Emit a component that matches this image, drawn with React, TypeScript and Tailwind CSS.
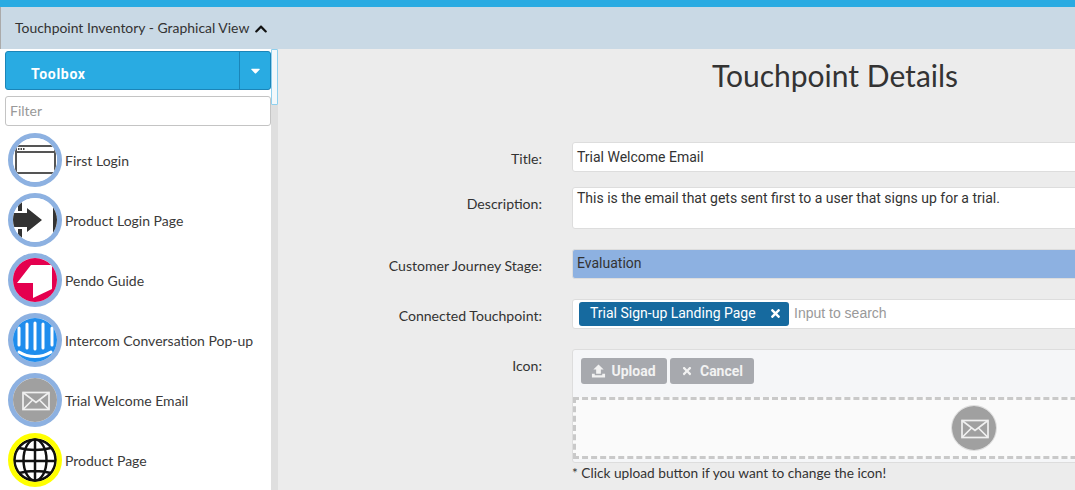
import { FaCaretDown, FaChevronUp, FaTimes } from "react-icons/fa";
import type { ReactNode } from "react";

function WindowIcon() {
  return (
    <svg viewBox="0 0 44 44" className="w-full h-full bg-white">
      <rect x="3" y="8" width="39" height="27" fill="none" stroke="#555" strokeWidth="2" />
      <path d="M3 14h39" stroke="#555" strokeWidth="2" />
      <path d="M5 11h1.500M7.500 11h1.500M10 11h1.500" stroke="#444" strokeWidth="1.800" />
    </svg>
  );
}

function LoginIcon() {
  return (
    <svg viewBox="0 0 44 44" className="w-full h-full bg-white">
      <path d="M5 0h4v13H5zM5 31h4v13H5zM40 0h4v44h-4z" fill="#333" />
      <path d="M0 15h14V10l15 12-15 12v-5H0z" fill="#333" />
    </svg>
  );
}

function PendoIcon() {
  return (
    <svg viewBox="0 0 44 44" className="w-full h-full bg-[#e4004f]">
      <path d="M18 7h21v24L20 40V25H4z" fill="#fff" />
    </svg>
  );
}

function IntercomIcon() {
  return (
    <svg viewBox="0 0 44 44" className="w-full h-full bg-[#1f8ded]">
      <path d="M6 10v17M14 6v24M22 5v26M30 6v24M39 10v17" stroke="#fff" strokeWidth="3" strokeLinecap="round" />
      <path d="M6 34c9 6 23 6 32 0" fill="none" stroke="#fff" strokeWidth="3" strokeLinecap="round" />
    </svg>
  );
}

function EnvelopeIcon() {
  return (
    <svg viewBox="0 0 44 44" className="w-full h-full bg-[#a0a0a0]">
      <rect x="10" y="14.500" width="26" height="17" fill="none" stroke="#f0f0f0" strokeWidth="1.700" />
      <path d="M10 14.500l13 10 13-10M10 31.500l9.500-9.500M36 31.500l-9.500-9.500" fill="none" stroke="#f0f0f0" strokeWidth="1.700" />
    </svg>
  );
}

function GlobeIcon() {
  return (
    <svg viewBox="0 0 44 44" className="w-full h-full bg-[#ffff00]">
      <g fill="#fff" stroke="#111" strokeWidth="2.500">
        <circle cx="22" cy="22" r="20.500" />
        <ellipse cx="22" cy="22" rx="11.500" ry="20.500" />
        <path d="M22 2v40M2 23h40M6 10c10 2.500 22 2.500 32 0M6 35c10-2.500 22-2.500 32 0" fill="none" />
      </g>
    </svg>
  );
}

const tools: { name: string; icon: ReactNode; ring: string }[] = [
  { name: "First Login", icon: <WindowIcon />, ring: "border-[#8db1e1]" },
  { name: "Product Login Page", icon: <LoginIcon />, ring: "border-[#8db1e1]" },
  { name: "Pendo Guide", icon: <PendoIcon />, ring: "border-[#8db1e1]" },
  { name: "Intercom Conversation Pop-up", icon: <IntercomIcon />, ring: "border-[#8db1e1]" },
  { name: "Trial Welcome Email", icon: <EnvelopeIcon />, ring: "border-[#8db1e1]" },
  { name: "Product Page", icon: <GlobeIcon />, ring: "border-[#ffff00]" },
];

function Row({ label, top, children }: { label: string; top?: boolean; children: ReactNode }) {
  return (
    <div className={`flex gap-[30px] ${top ? "items-start" : "items-center"}`}>
      <label className={`w-[264px] shrink-0 text-right text-[14.1px] text-[#333] ${top ? "pt-[6px]" : "pt-[4px]"}`}>
        {label}
      </label>
      <div className="flex-1 min-w-0">{children}</div>
    </div>
  );
}

export default function App() {
  return (
    <div className="h-[490px] w-[1075px] overflow-hidden bg-white font-['Lato',sans-serif] text-[#333]">
      <div className="h-[7px] bg-[#29abe2]" />
      <div className="flex h-[42px] items-center gap-[5px] border-l border-[#aaa] bg-[#c9d9e5] pl-[14px] text-[13.95px]">
        <span>Touchpoint Inventory - Graphical View</span>
        <FaChevronUp className="mt-[1px] w-[14px] h-[14px] text-[#111]" />
      </div>

      <div className="flex h-[441px]">
        <aside className="flex w-[271px] shrink-0 flex-col pl-[5px] pt-[2px]">
          <div className="flex h-[40px] rounded-[3px] border border-[#1b85b8] bg-[#29abe2] text-white">
            <div className="flex flex-1 items-center pl-[25px] pt-[8px] font-['Roboto',sans-serif] text-[14px] font-bold tracking-[0.7px]">
              Toolbox
            </div>
            <div className="flex w-[31px] items-center justify-center border-l border-[#1b85b8]">
              <FaCaretDown className="w-[15px] h-[15px]" />
            </div>
          </div>
          <input
            readOnly
            placeholder="Filter"
            className="mt-[5px] h-[30px] translate-y-px rounded-[3px] border border-[#c4c4c4] px-[4px] pb-[2px] text-[14px] outline-none placeholder:text-[#999]"
          />
          <ul className="mt-[5px] flex flex-col">
            {tools.map((t) => (
              <li key={t.name} className="flex h-[60px] items-center gap-[3px] pl-[3px] text-[14px] text-[#3a3a3a]">
                <div className={`h-[54px] w-[54px] shrink-0 overflow-hidden rounded-full border-[5px] ${t.ring}`}>
                  {t.icon}
                </div>
                <span className="whitespace-nowrap">{t.name}</span>
              </li>
            ))}
          </ul>
        </aside>

        <div className="w-[7px] shrink-0 bg-[#dfdfdf]">
          <div className="h-[56px] rounded-[1px] border border-[#8fd0ee] bg-[#f2f8fb]" />
        </div>

        <main className="min-w-0 flex-1 overflow-hidden bg-[#ececec]">
          <div className="w-[1114px] pr-[16px]">
            <h1 className="pl-[16px] pt-[8px] text-center text-[30px] font-normal leading-[36px] text-[#333]">
              Touchpoint Details
            </h1>
            <div className="mt-[49px] flex flex-col">
              <Row label="Title:">
                <div className="flex h-[30px] items-center rounded-[3px] border border-[#ddd] bg-white px-[4px] font-['Roboto',sans-serif] text-[14px] text-[#333]">
                  Trial Welcome Email
                </div>
              </Row>
              <div className="mt-[15px]">
                <Row label="Description:" top>
                  <div className="h-[42px] rounded-[3px] border border-[#ddd] bg-white px-[4px] font-['Roboto',sans-serif] text-[14px] text-[#333]">
                    This is the email that gets sent first to a user that signs up for a trial.
                  </div>
                </Row>
              </div>
              <div className="mt-[20px]">
                <Row label="Customer Journey Stage:">
                  <div className="flex h-[30px] items-center rounded-[3px] border border-[#ddd] bg-[#8db1e1] px-[4px] pb-[2px] font-['Roboto',sans-serif] text-[14px] text-[#333]">
                    Evaluation
                  </div>
                </Row>
              </div>
              <div className="mt-[20px]">
                <Row label="Connected Touchpoint:">
                  <div className="flex h-[30px] items-center gap-[5px] rounded-[3px] border border-[#ddd] bg-white pl-[6px] font-['Roboto',sans-serif] text-[14px]">
                    <span className="flex h-[24px] w-[210px] items-center justify-between rounded-[3px] bg-[#166a9f] pb-[1px] pl-[11px] pr-[7px] text-white">
                      Trial Sign-up Landing Page
                      <FaTimes className="w-[13px] h-[13px]" />
                    </span>
                    <span className="pb-[1px] font-['Liberation_Sans',sans-serif] text-[#999]">Input to search</span>
                  </div>
                </Row>
              </div>
              <div className="mt-[20px]">
                <Row label="Icon:" top>
                  <div className="rounded-[3px] border border-[#ddd] bg-[#f5f6f8] pb-[3px] font-['Roboto',sans-serif]">
                    <div className="flex gap-[3px] px-[8px] pt-[8px] pb-[13px] text-[14px] font-bold text-[#f2f2f2]">
                      <span className="flex h-[26px] w-[86px] items-center justify-center gap-[5px] rounded-[3px] bg-[#a7a9ae] pr-[1px]">
                        <svg viewBox="0 0 16 14" className="w-[15px] h-[14px]" fill="currentColor">
                          <path d="M8 0l5.500 5.500H10.500V10h-5V5.500H2.500zM1 10h3v1.500h8V10h3v4H1z" />
                        </svg>
                        Upload
                      </span>
                      <span className="flex h-[26px] w-[84px] items-center justify-center gap-[7px] rounded-[3px] bg-[#a7a9ae]">
                        <FaTimes className="w-[12px] h-[12px]" />
                        Cancel
                      </span>
                    </div>
                    <div className="flex h-[62px] items-center justify-center border-[3px] border-dashed border-[#c9c9c9] bg-[#fafafa]">
                      <div className="h-[46px] w-[46px] overflow-hidden rounded-full border border-[#ddd]">
                        <EnvelopeIcon />
                      </div>
                    </div>
                  </div>
                  <p className="text-[13.7px] leading-[20px] text-[#333]">
                    * Click upload button if you want to change the icon!
                  </p>
                </Row>
              </div>
            </div>
          </div>
        </main>
      </div>
    </div>
  );
}
